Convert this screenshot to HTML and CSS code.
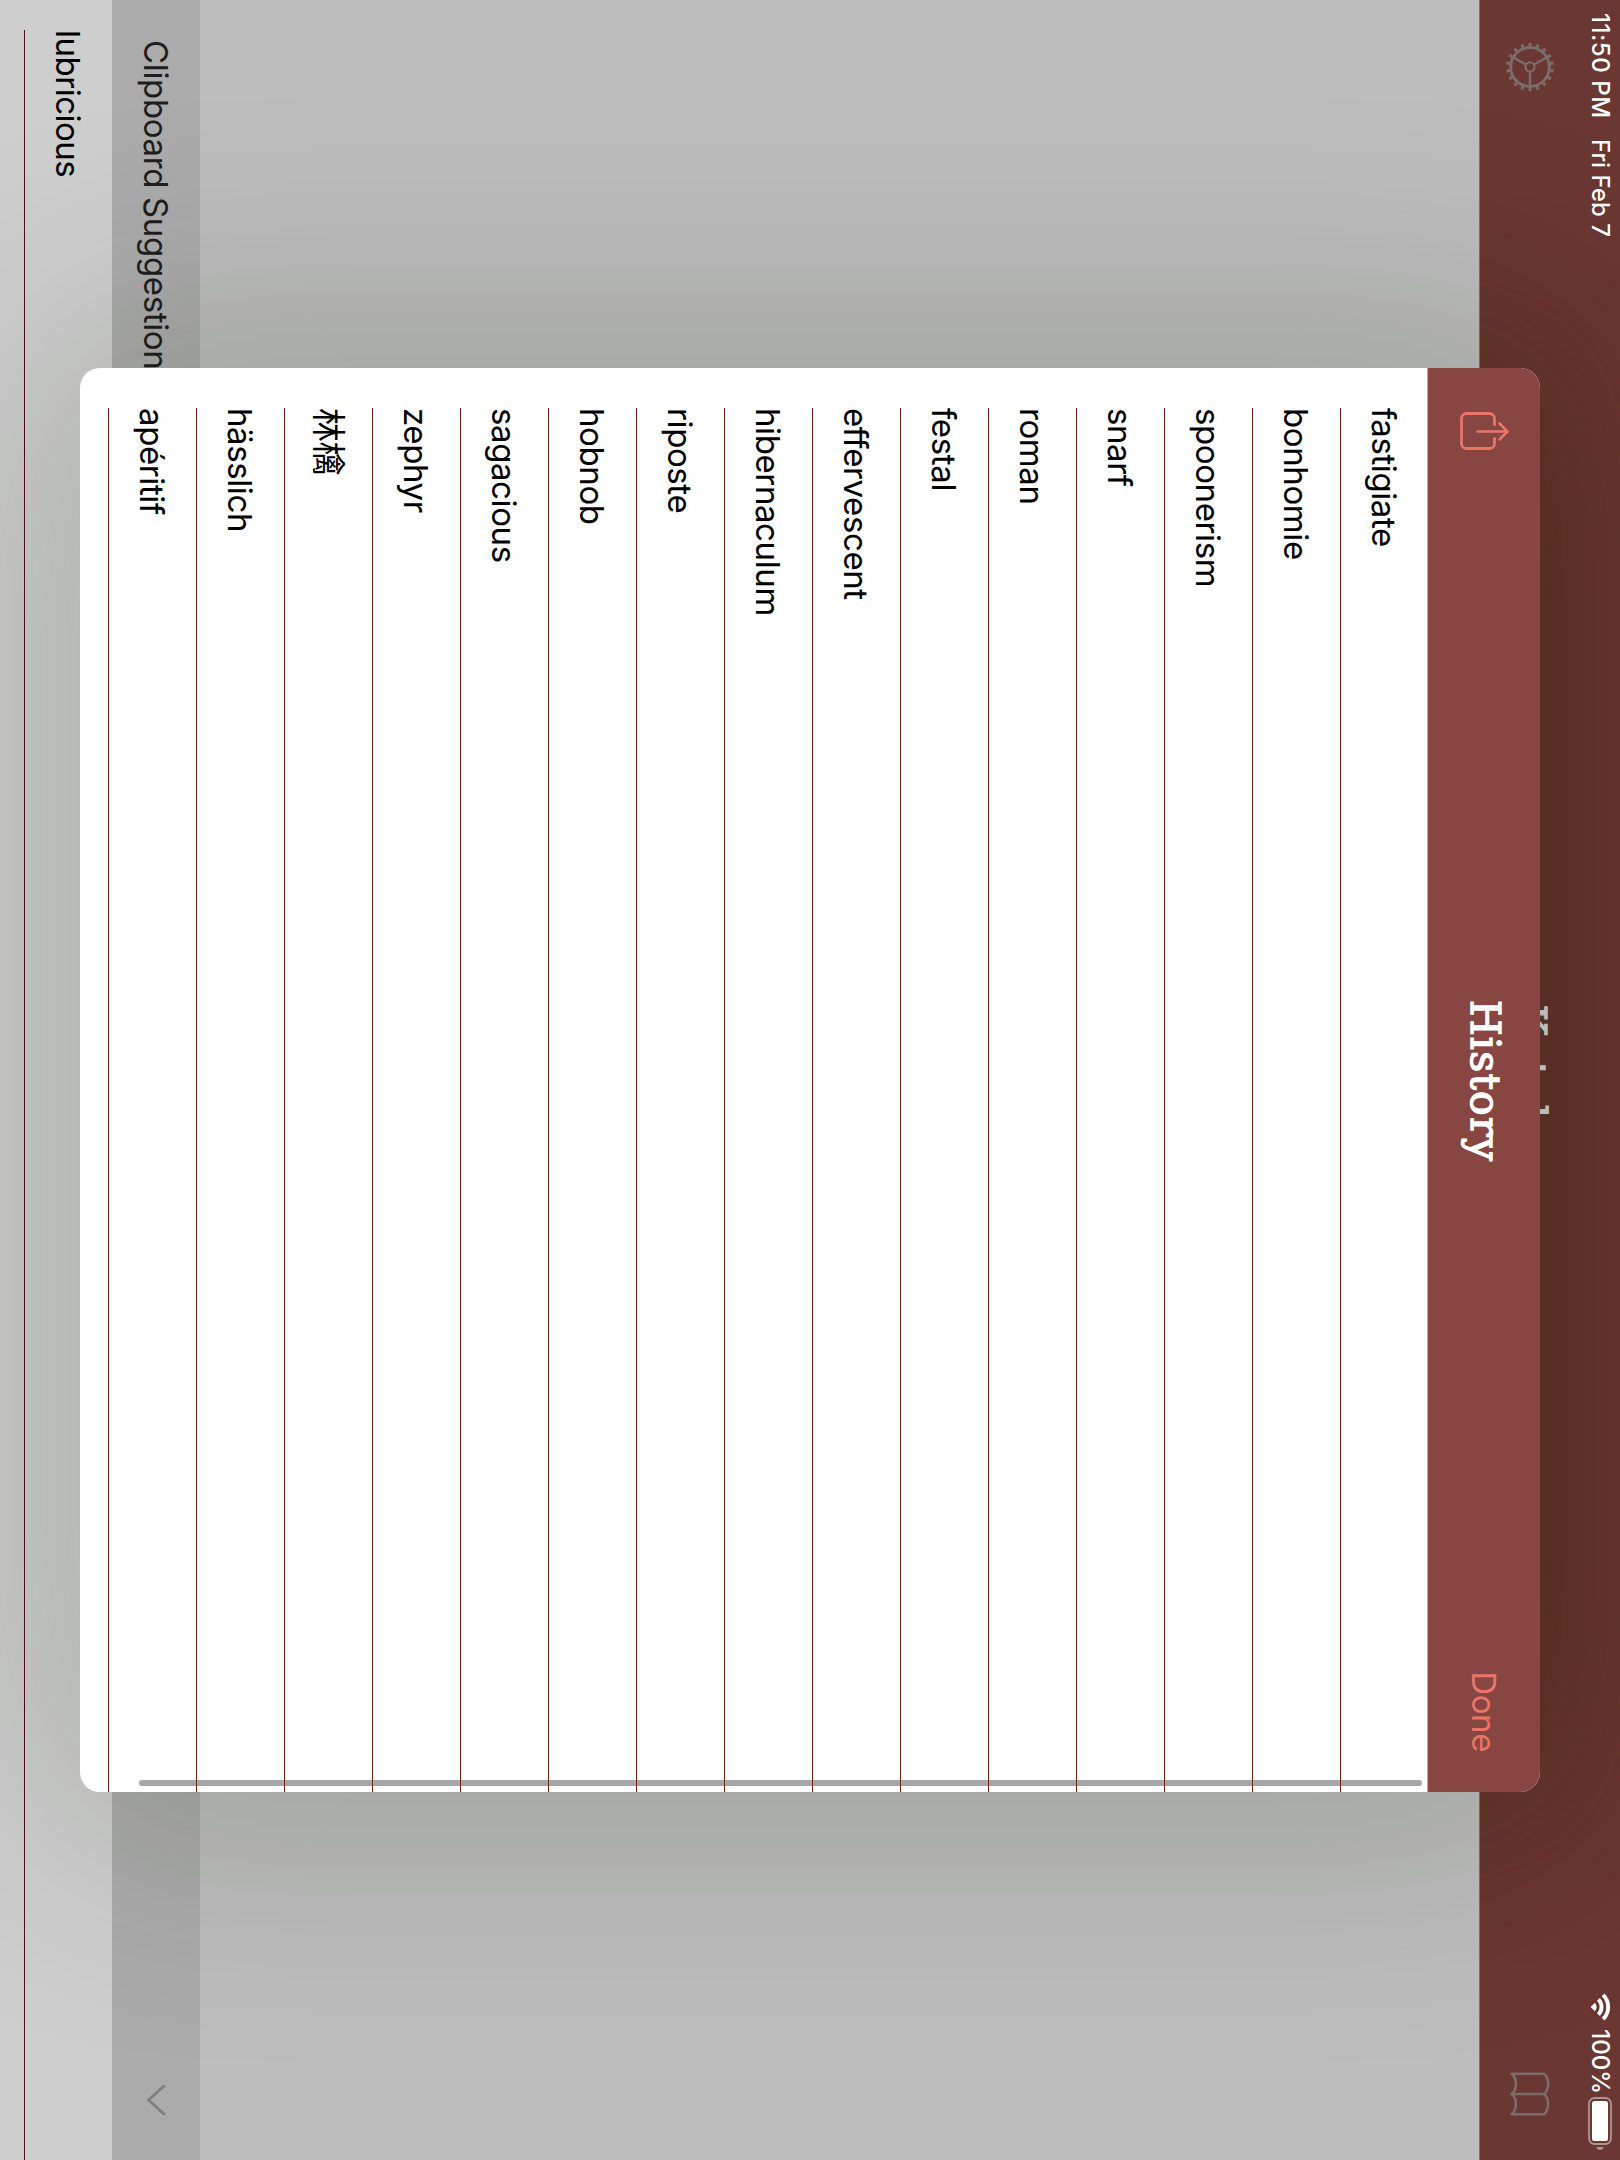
FILE: index.html
```html
<!DOCTYPE html>
<html lang="en">
<head>
<meta charset="utf-8">
<title>Kotoba</title>
<link rel="stylesheet" href="styles.css">
</head>
<body>
<div class="viewport">
<div class="device">
  <header class="topbar">
    <div class="status">
      <div class="status-group">
        <span class="time">11:50 PM</span>
        <span class="date">Fri Feb 7</span>
      </div>
      <div class="status-group status-right">
        <svg class="wifi" width="28" height="21" viewBox="0 0 28 21">
          <g fill="none" stroke="#fff" stroke-width="3.9">
            <path d="M1.8 7.9a17.2 17.2 0 0 1 24.4 0"/>
            <path d="M6.4 12.6a10.8 10.8 0 0 1 15.2 0"/>
          </g>
          <path d="M14 20.4l-4.2-4.3a6 6 0 0 1 8.4 0z" fill="#fff"/>
        </svg>
        <span class="percent">100%</span>
        <svg class="battery" width="54" height="24" viewBox="0 0 54 24">
          <rect x="1" y="1" width="46" height="22" rx="5.5" fill="none" stroke="#b09391" stroke-width="1.8"/>
          <rect x="4" y="4" width="40" height="16" rx="2.6" fill="#fff"/>
          <path d="M50 8c2 .9 3 2.3 3 4s-1 3.1-3 4z" fill="#b09391"/>
        </svg>
      </div>
    </div>
    <div class="navbar">
      <svg class="gear" width="50" height="50" viewBox="-25 -25 50 50">
        <g fill="none" stroke="#7b6b69">
          <circle r="19.4" stroke-width="3"/>
          <circle r="4.6" stroke-width="2.3"/>
          <path d="M5 0H19M-2.5 4.33L-9.5 16.45M-2.5-4.33L-9.5-16.45" stroke-width="2.5"/>
          <circle r="22.1" stroke-width="3.7" pathLength="180" stroke-dasharray="4 6" stroke-dashoffset="2"/>
        </g>
      </svg>
      <h1 class="app-title">Kotoba</h1>
      <svg class="book" width="46" height="42" viewBox="0 0 46 42">
        <path d="M2.7 39.3V7C7.5 1.5 18.5 1.5 23 7C27.5 1.5 38.5 1.5 43.3 7V39.3C38.5 33.7 27.5 33.7 23 39.3C18.5 33.7 7.5 33.7 2.7 39.3ZM23 7V39.3" fill="none" stroke="#7b6b69" stroke-width="2.6" stroke-linejoin="round"/>
      </svg>
    </div>
  </header>
  <main class="page">
    <section class="definition"></section>
    <section class="clipboard">
      <h2 class="clipboard-title">Clipboard Suggestions</h2>
      <svg width="32" height="20" viewBox="0 0 32 20"><path d="M2 2L16 17.5L30 2" fill="none" stroke="#808080" stroke-width="3" stroke-linecap="round" stroke-linejoin="round"/></svg>
    </section>
    <section class="suggestions"><div class="suggestion">lubricious</div></section>
  </main>

  <div class="modal-shade"></div>
  <div class="modal">
    <div class="modal-head">
      <svg class="share" width="40" height="52" viewBox="0 0 40 52">
        <g fill="none" stroke="#ea7566" stroke-linecap="round" stroke-linejoin="round">
          <path d="M13.4 15.5H6.5a5 5 0 0 0-5 5V43.5a5 5 0 0 0 5 5H31.5a5 5 0 0 0 5-5V20.5a5 5 0 0 0-5-5H25.4" stroke-width="2.9" stroke-linecap="butt"/>
          <path d="M19.5 32.5V3M11.5 10.5L19.5 2.5L27.5 10.5" stroke-width="2.6"/>
        </g>
      </svg>
      <h2 class="modal-title">History</h2>
      <span class="done">Done</span>
    </div>
    <div class="list">
      <div class="scrollbar"></div>
      <div class="row">fastigiate</div>
      <div class="row">bonhomie</div>
      <div class="row">spoonerism</div>
      <div class="row">snarf</div>
      <div class="row">roman</div>
      <div class="row">festal</div>
      <div class="row">effervescent</div>
      <div class="row">hibernaculum</div>
      <div class="row">riposte</div>
      <div class="row">hobnob</div>
      <div class="row">sagacious</div>
      <div class="row">zephyr</div>
      <div class="row cjk" lang="ja">林檎</div>
      <div class="row" lang="de">hässlich</div>
      <div class="row" lang="fr">apéritif</div>
    </div>
  </div>
</div>
</div>
</body>
</html>
```
FILE: styles.css
```css
* { box-sizing: border-box; }
body { margin: 0; }

.viewport {
  width: 1620px;
  height: 2160px;
  overflow: hidden;
}

/* landscape screen, turned a quarter clockwise */
.device {
  position: relative;
  display: flex;
  flex-direction: column;
  width: 2160px;
  height: 1620px;
  overflow: hidden;
  transform-origin: 0 0;
  transform: translateX(1620px) rotate(90deg);
  font-family: Inter, "Noto Sans CJK JP", sans-serif;
  font-size: 33px;
  letter-spacing: -0.4px;
  color: #000;
}

h1, h2 { margin: 0; font-weight: 400; font-size: inherit; }
svg { display: block; flex: none; }

.topbar {
  position: relative;
  overflow: hidden;
  height: 141px;
  background: #6b3732;
  border-bottom: 1px solid #77706e;
}
/* the modal's shadow is heavier on the coloured bar */
.topbar::before {
  content: "";
  position: absolute;
  left: 368px;
  top: 80px;
  width: 1424px;
  height: 1460px;
  border-radius: 20px;
  box-shadow: 0 0 160px 6px rgba(60, 22, 0, 0.34);
}

.status {
  position: relative;
  display: flex;
  justify-content: space-between;
  align-items: center;
  height: 39px;
  padding: 0 9px 0 13px;
  color: #fff;
  font-size: 24px;
  font-weight: 500;
  letter-spacing: 0;
}
.status-group { display: flex; align-items: center; gap: 21px; }
.time { width: 105px; letter-spacing: 0.55px; white-space: nowrap; }
.date { letter-spacing: 0; }
.status-right { gap: 0; }
.percent { margin: 0 3px 0 8px; }

.navbar {
  position: relative;
  display: grid;
  grid-template-columns: 1fr auto 1fr;
  align-items: center;
  height: 101px;
  padding: 0 43px 0 42px;
}
.book { justify-self: end; }
.app-title, .modal-title {
  font-family: "DejaVu Serif", serif;
  font-size: 41px;
  line-height: 48px;
  letter-spacing: 1.2px;
  -webkit-text-stroke: 1.4px currentColor;
}
.app-title { margin-left: 4px; padding-bottom: 1px; color: #d0d2ce; }

.page { flex: 1; display: flex; flex-direction: column; }
.definition { height: 1279px; background: #bdbdbd; }
.clipboard {
  display: flex;
  align-items: center;
  justify-content: space-between;
  height: 88px;
  padding: 0 44px 0 40px;
  background: #ababab;
}
.clipboard-title { color: #1e1e1e; line-height: 88px; letter-spacing: -0.35px; }
.suggestions { flex: 1; padding-left: 30px; background: #cecece; }
.suggestion {
  height: 88px;
  line-height: 88px;
  letter-spacing: -0.5px;
  border-bottom: 1px solid #4e110b;
}

.modal-shade, .modal {
  position: absolute;
  left: 368px;
  top: 80px;
  width: 1424px;
  height: 1460px;
  border-radius: 20px;
}
.modal-shade { box-shadow: 0 0 250px 30px rgba(14, 36, 0, 0.2); }
.modal { overflow: hidden; background: #fff; }

.modal-head {
  display: grid;
  grid-template-columns: 1fr auto 1fr;
  align-items: center;
  height: 112px;
  padding: 0 40px 0 44px;
  background: #874641;
  color: #fff;
}
.modal-title { padding-bottom: 2px; margin-left: -2px; }
.done { justify-self: end; color: #ea7566; }

.list { position: relative; height: 1348px; padding-left: 40px; box-shadow: inset 0 1px #b3adac; }
.row {
  position: relative;
  height: 88px;
  line-height: 88px;
  border-bottom: 1px solid #701e18;
}
.cjk { font-size: 34px; }
.scrollbar {
  position: absolute;
  right: 6px;
  top: 6px;
  width: 6px;
  height: 1283px;
  border-radius: 3px;
  background: #a6a6a6;
}
```
